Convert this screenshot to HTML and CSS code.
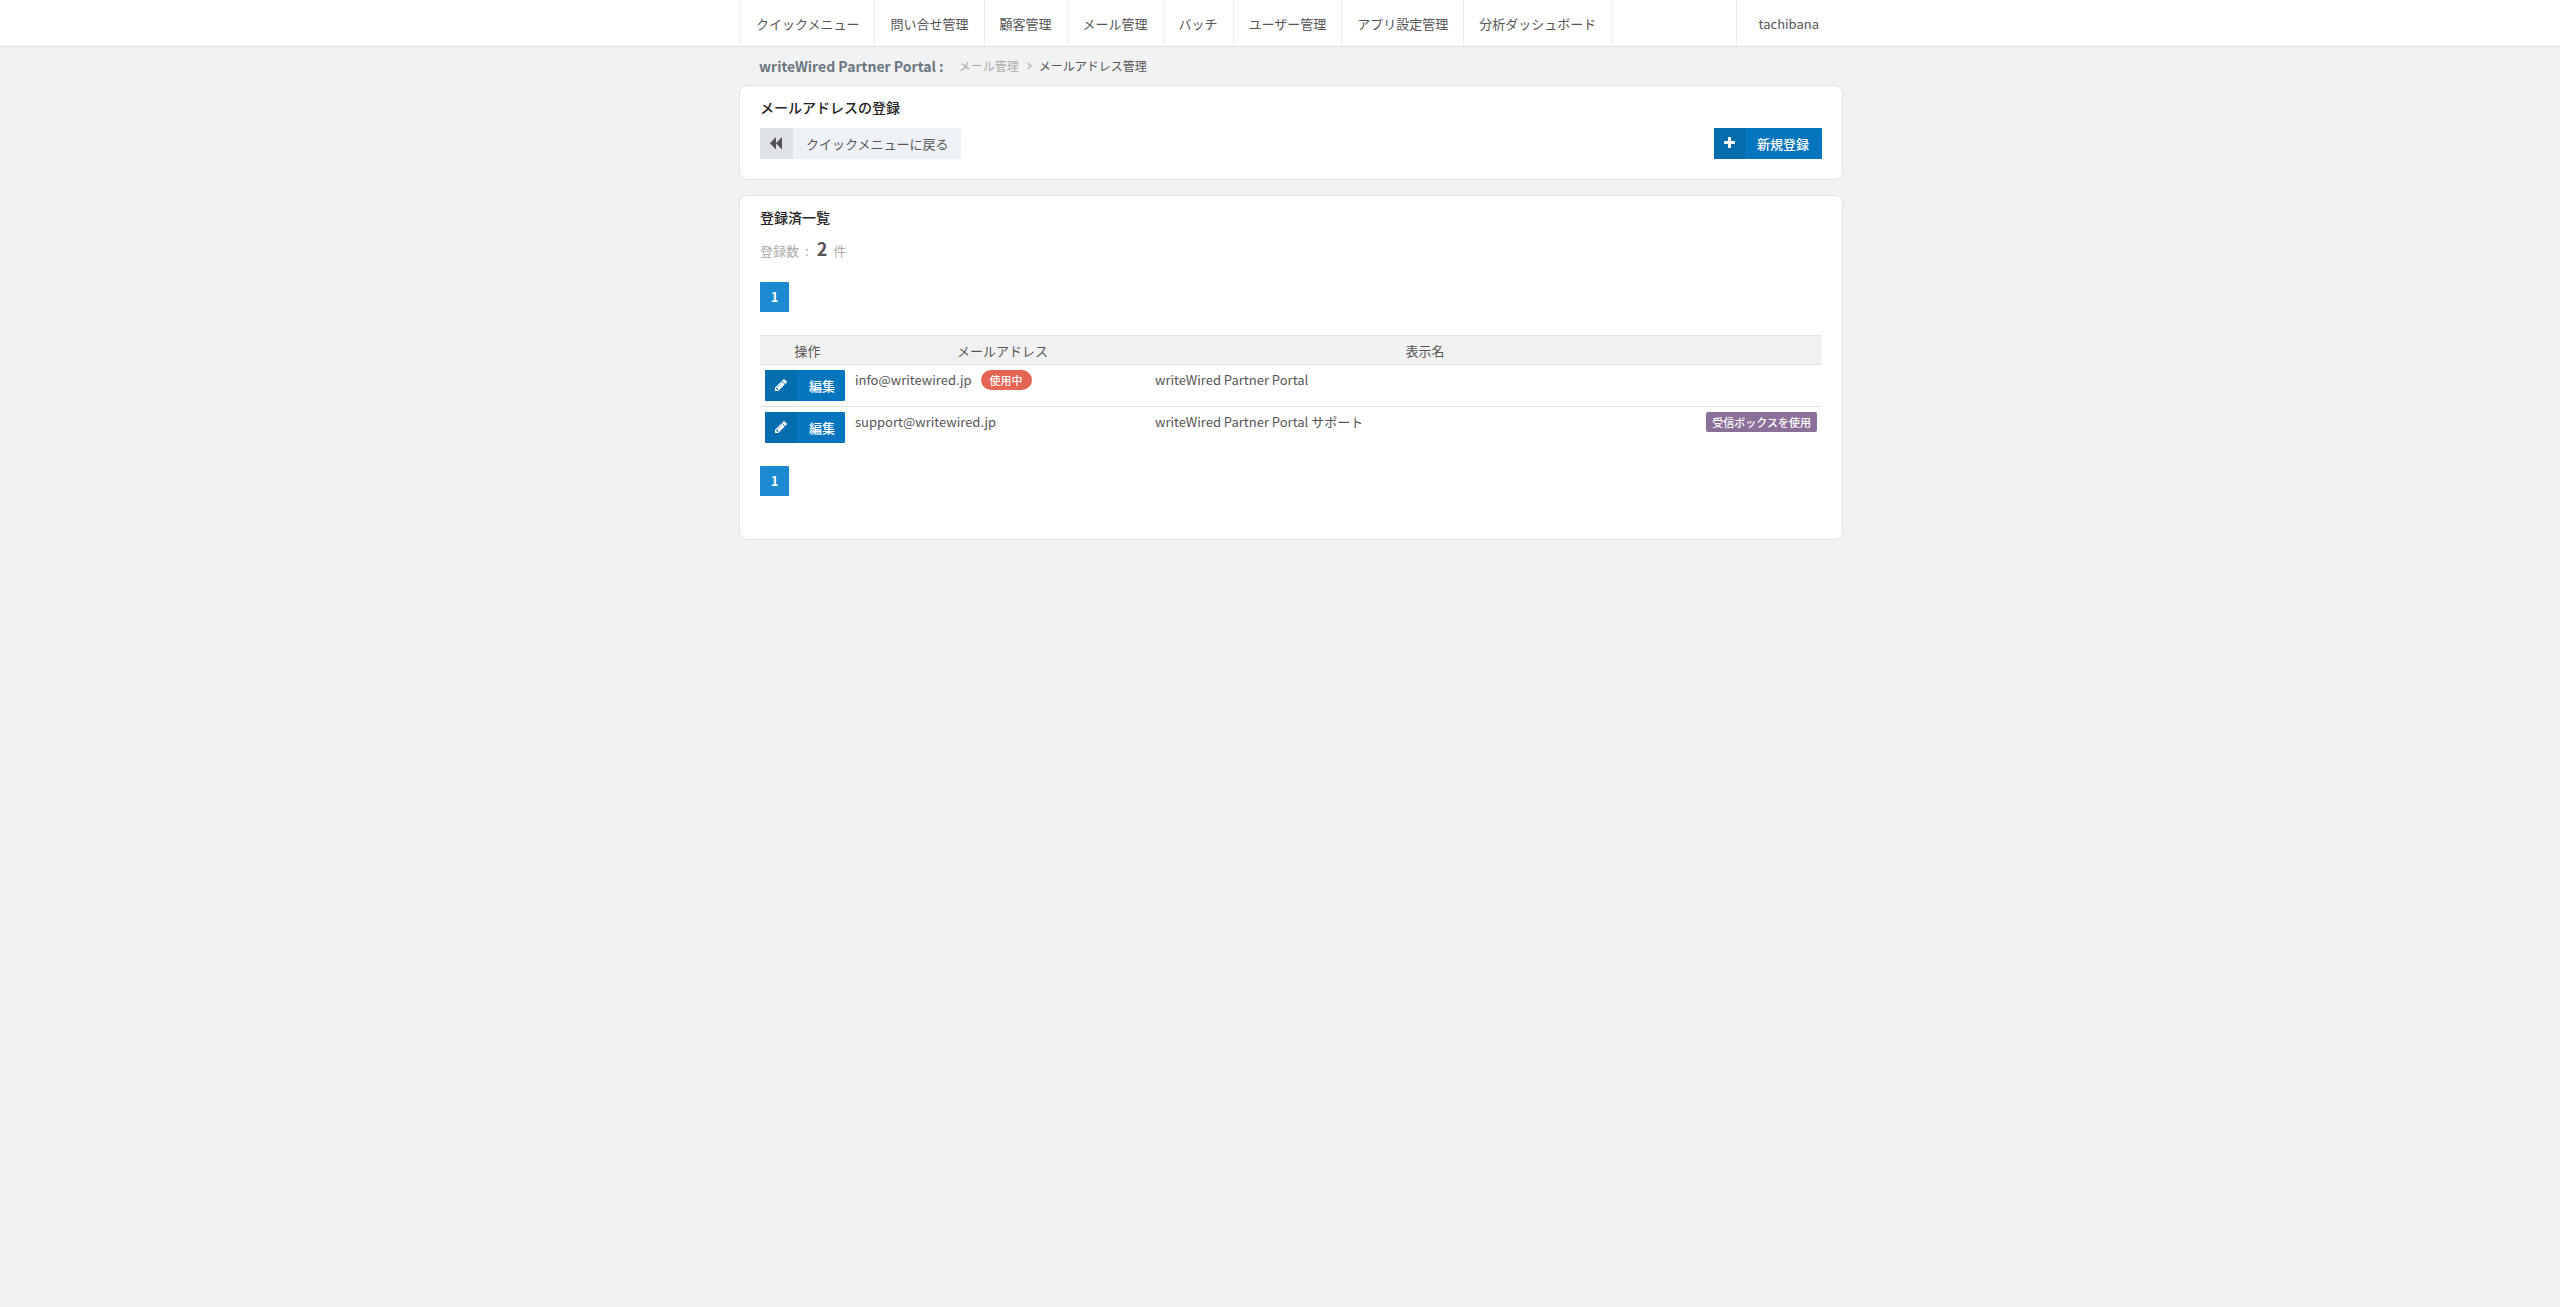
FILE: index.html
```
<!DOCTYPE html>
<html lang="ja">
<head>
    <meta charset="UTF-8">
    <meta name="viewport" content="width=device-width, initial-scale=1.0">
    <title>メールアドレス管理</title>
    <link rel="stylesheet" href="styles.css">
</head>
<body>
    <header class="header">
        <div class="wrap header-inner">
            <nav class="nav">
                <a href="#">クイックメニュー</a>
                <a href="#">問い合せ管理</a>
                <a href="#">顧客管理</a>
                <a href="#">メール管理</a>
                <a href="#">バッチ</a>
                <a href="#">ユーザー管理</a>
                <a href="#">アプリ設定管理</a>
                <a href="#">分析ダッシュボード</a>
            </nav>
            <a class="user" href="#">tachibana</a>
        </div>
    </header>

    <div class="wrap">
        <div class="breadcrumb">
            <span class="site-name">writeWired Partner Portal :</span>
            <a href="#">メール管理</a>
            <svg class="arrow" viewBox="0 0 5 8"><path d="M1 1l3 3-3 3"/></svg>
            <span>メールアドレス管理</span>
        </div>

        <main>
            <section class="card">
                <h1>メールアドレスの登録</h1>
                <div class="actions">
                    <button type="button" class="btn btn-back">
                        <span class="icon"><svg width="13" height="14" viewBox="128 0 1664 1792"><path d="M1619 173q19-19 32-13t13 32v1472q0 26-13 32t-32-13l-710-710q-9-9-13-19v710q0 26-13 32t-32-13l-710-710q-19-19-19-45t19-45l710-710q19-19 32-13t13 32v710q4-10 13-19z"/></svg></span>
                        <span class="label">クイックメニューに戻る</span>
                    </button>
                    <button type="button" class="btn">
                        <span class="icon"><svg width="11" height="14" viewBox="192 0 1408 1792"><path d="M1600 736v192q0 40-28 68t-68 28h-416v416q0 40-28 68t-68 28h-192q-40 0-68-28t-28-68v-416h-416q-40 0-68-28t-28-68v-192q0-40 28-68t68-28h416v-416q0-40 28-68t68-28h192q40 0 68 28t28 68v416h416q40 0 68 28t28 68z"/></svg></span>
                        <span class="label">新規登録</span>
                    </button>
                </div>
            </section>

            <section class="card card-list">
                <h1>登録済一覧</h1>
                <p class="count">登録数<span class="colon">:</span><strong>2</strong>件</p>

                <div class="pager"><a href="#">1</a></div>

                <table class="list">
                    <colgroup>
                        <col class="col-action">
                        <col class="col-mail">
                        <col>
                        <col class="col-status">
                    </colgroup>
                    <thead>
                        <tr>
                            <th>操作</th>
                            <th>メールアドレス</th>
                            <th>表示名</th>
                            <th></th>
                        </tr>
                    </thead>
                    <tbody>
                        <tr>
                            <td>
                                <button type="button" class="btn btn-edit">
                                    <span class="icon"><svg width="12" height="14" viewBox="128 0 1536 1792"><path d="M491 1536l91-91-235-235-91 91v107h128v128h107zm523-928q0-22-22-22-10 0-17 7l-542 542q-7 7-7 17 0 22 22 22 10 0 17-7l542-542q7-7 7-17zm-54-192l416 416-832 832h-416v-416zm683 96q0 53-37 90l-166 166-416-416 166-165q36-38 90-38 53 0 91 38l235 234q37 39 37 91z"/></svg></span>
                                    <span class="label">編集</span>
                                </button>
                            </td>
                            <td><div class="mail">info@writewired.jp<span class="badge badge-active">使用中</span></div></td>
                            <td>writeWired Partner Portal</td>
                            <td></td>
                        </tr>
                        <tr>
                            <td>
                                <button type="button" class="btn btn-edit">
                                    <span class="icon"><svg width="12" height="14" viewBox="128 0 1536 1792"><path d="M491 1536l91-91-235-235-91 91v107h128v128h107zm523-928q0-22-22-22-10 0-17 7l-542 542q-7 7-7 17 0 22 22 22 10 0 17-7l542-542q7-7 7-17zm-54-192l416 416-832 832h-416v-416zm683 96q0 53-37 90l-166 166-416-416 166-165q36-38 90-38 53 0 91 38l235 234q37 39 37 91z"/></svg></span>
                                    <span class="label">編集</span>
                                </button>
                            </td>
                            <td><div class="mail">support@writewired.jp</div></td>
                            <td>writeWired Partner Portal サポート</td>
                            <td><div class="status"><span class="badge badge-inbox">受信ボックスを使用</span></div></td>
                        </tr>
                    </tbody>
                </table>

                <div class="pager"><a href="#">1</a></div>
            </section>
        </main>
    </div>
</body>
</html>
```

FILE: styles.css
```
* {
    margin: 0;
    padding: 0;
    box-sizing: border-box;
}

body {
    font-family: "Noto Sans CJK JP", sans-serif;
    font-size: 13px;
    line-height: 20px;
    color: #555;
    background-color: #f1f2f4;
}

a {
    color: inherit;
    text-decoration: none;
}

.wrap {
    max-width: 1126px;
    margin: 0 auto;
    padding-left: 22px;
}

/* header */
.header {
    background-color: #fff;
    border-bottom: 1px solid #e2e2e2;
}

.header-inner {
    display: flex;
    justify-content: space-between;
}

.nav {
    display: flex;
    margin-left: 1px;
    border-left: 1px solid #eee;
}

.nav a {
    padding: 14px 15px 12px;
    border-right: 1px solid #eee;
}

.user {
    padding: 14px 24px 12px 22px;
    border-left: 1px solid #eee;
}

/* breadcrumb */
.breadcrumb {
    display: flex;
    align-items: center;
    height: 38px;
    padding: 0 20px 1px;
    font-size: 12px;
}

.breadcrumb a {
    color: #aaa;
}

.site-name {
    margin-right: 15px;
    font-size: 14px;
    font-weight: bold;
    color: #6c7780;
}

.arrow {
    width: 5px;
    height: 8px;
    margin: 0 7px 0 8px;
    fill: none;
    stroke: #c4c4c4;
    stroke-width: 2;
}

/* card */
.card {
    margin-bottom: 15px;
    padding: 11px 20px 20px;
    background-color: #fff;
    border: 1px solid #e2e3e5;
    border-radius: 8px;
}

.card h1 {
    font-size: 14px;
    font-weight: 500;
    color: #222;
}

.actions {
    display: flex;
    justify-content: space-between;
    margin-top: 11px;
}

/* buttons */
.btn {
    display: flex;
    height: 31px;
    border: none;
    border-radius: 1px;
    overflow: hidden;
    font-family: inherit;
    font-size: 13px;
    font-weight: 500;
    line-height: 32px;
    color: #fff;
    background-color: #0576bd;
    cursor: pointer;
}

.btn .icon {
    display: flex;
    align-items: center;
    height: 31px;
    padding: 0 10px 2px;
    background-color: #046dae;
}

.btn svg {
    fill: currentColor;
}

.btn .label {
    padding: 0 13px 0 12px;
}

.btn-back {
    font-weight: normal;
    color: #555;
    background-color: #eef2f7;
}

.btn-back .icon {
    background-color: #dfe3e8;
}

.btn-back .label {
    padding-left: 13px;
}

.btn-edit .label {
    padding-right: 10px;
}

/* list */
.card-list {
    padding-bottom: 43px;
}

.count {
    margin-top: 8px;
    line-height: 26px;
    color: #aaa;
}

.colon {
    margin: 0 8px 0 6px;
}

.count strong {
    margin-right: 6px;
    font-size: 18px;
    color: #555;
}

.pager {
    display: flex;
    margin: 18px 0;
}

.pager a {
    width: 29px;
    border-radius: 1px;
    font-weight: bold;
    line-height: 30px;
    text-align: center;
    color: #fff;
    background-color: #1c8ad1;
}

.card-list .pager:last-child {
    margin-bottom: 0;
}

.list {
    width: 100%;
    margin-top: 23px;
    table-layout: fixed;
    border-collapse: separate;
    border-spacing: 0;
}

.col-action {
    width: 90px;
}

.col-mail {
    width: 300px;
}

.col-status {
    width: 127px;
}

.list th {
    padding: 5px 0 3px 5px;
    font-weight: normal;
    background-color: #f1f1f1;
    border-top: 1px solid #e2e3e4;
    border-bottom: 1px solid #e2e3e4;
}

.list td {
    padding: 5px;
    vertical-align: top;
    border-bottom: 1px solid #e2e3e4;
}

.list tr:last-child td {
    border-bottom: none;
}

.mail,
.status {
    display: flex;
}

.status {
    justify-content: flex-end;
}

.badge {
    font-size: 11px;
    font-weight: 500;
    white-space: nowrap;
    color: #fff;
}

.badge-active {
    margin-left: 9px;
    padding: 0 9px;
    border-radius: 10px;
    background-color: #e66454;
}

.badge-inbox {
    padding: 0 6px;
    border-radius: 2px;
    background-color: #8a7099;
}
```
